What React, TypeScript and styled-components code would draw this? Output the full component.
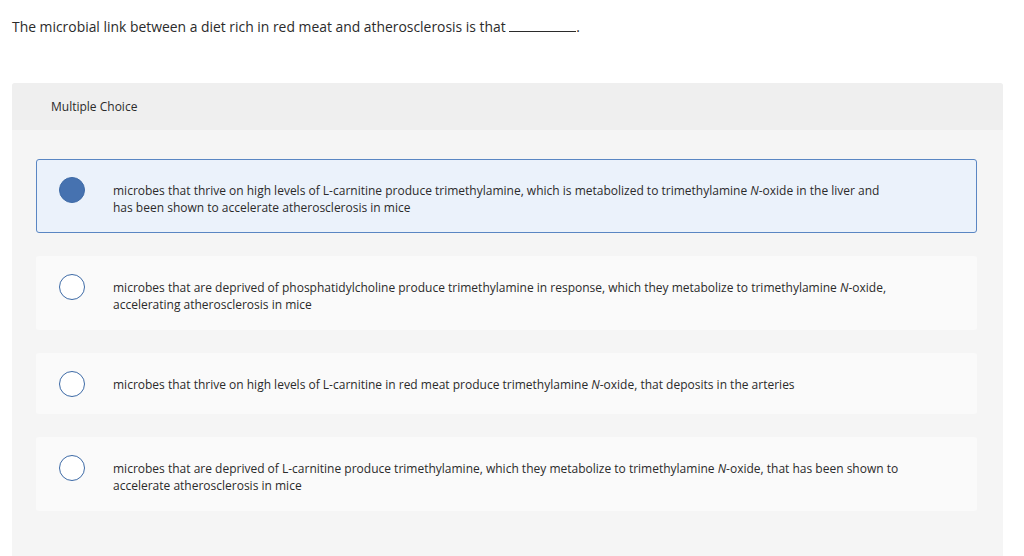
import React, { useState } from "react";
import styled, { createGlobalStyle } from "styled-components";

const GlobalStyle = createGlobalStyle`
  body {
    margin: 0;
    background: #ffffff;
    font-family: "Open Sans", "Liberation Sans", Arial, sans-serif;
    color: #333333;
  }
`;

const Page = styled.div`
  padding: 17px 21px 0 12px;
`;

const Question = styled.p`
  margin: 0 0 47px;
  font-size: 13.9px;
  line-height: 19px;
  color: #2b2b2b;
`;

const Blank = styled.span`
  display: inline-block;
  width: 67px;
  border-bottom: 1px solid #2b2b2b;
  vertical-align: baseline;
`;

const Panel = styled.section`
  background: #f5f5f5;
  border-radius: 3px 3px 0 0;
  min-height: 473px;
`;

const PanelHeader = styled.div`
  height: 47px;
  display: flex;
  align-items: center;
  padding-left: 39px;
  background: #efefef;
  border-radius: 3px 3px 0 0;
  font-size: 12px;
  color: #2b2b2b;
`;

const Choices = styled.ul`
  list-style: none;
  margin: 0;
  padding: 29px 26px 0 24px;
  display: flex;
  flex-direction: column;
  gap: 23px;
`;

const Choice = styled.li<{ $selected: boolean }>`
  display: flex;
  align-items: flex-start;
  gap: 28px;
  padding: 17px 24px 16px 22px;
  border: 1px solid ${(p) => (p.$selected ? "#5a86c3" : "transparent")};
  border-radius: 3px;
  background: ${(p) => (p.$selected ? "#ebf2fb" : "#fafafa")};
  cursor: pointer;
`;

const Radio = styled.span<{ $selected: boolean }>`
  flex: 0 0 auto;
  width: 26px;
  height: 26px;
  box-sizing: border-box;
  border-radius: 50%;
  border: 1.5px solid #3d6aa6;
  background: ${(p) => (p.$selected ? "#4672b0" : "#ffffff")};
`;

const ChoiceText = styled.span`
  max-width: 787px;
  padding-top: 5px;
  font-size: 12px;
  line-height: 17px;
  color: #2b2b2b;
`;

const choices: React.ReactNode[] = [
  <>
    microbes that thrive on high levels of L-carnitine produce trimethylamine,
    which is metabolized to trimethylamine <i>N</i>-oxide in the liver and has
    been shown to accelerate atherosclerosis in mice
  </>,
  <>
    microbes that are deprived of phosphatidylcholine produce trimethylamine in
    response, which they metabolize to trimethylamine <i>N</i>-oxide,
    accelerating atherosclerosis in mice
  </>,
  <>
    microbes that thrive on high levels of L-carnitine in red meat produce
    trimethylamine <i>N</i>-oxide, that deposits in the arteries
  </>,
  <>
    microbes that are deprived of L-carnitine produce trimethylamine, which they
    metabolize to trimethylamine <i>N</i>-oxide, that has been shown to
    accelerate atherosclerosis in mice
  </>,
];

const App: React.FC = () => {
  const [selected, setSelected] = useState(0);
  return (
    <>
      <GlobalStyle />
      <Page>
        <Question>
          The microbial link between a diet rich in red meat and
          atherosclerosis is that <Blank />.
        </Question>
        <Panel>
          <PanelHeader>Multiple Choice</PanelHeader>
          <Choices>
            {choices.map((c, i) => (
              <Choice
                key={i}
                $selected={selected === i}
                onClick={() => setSelected(i)}
              >
                <Radio $selected={selected === i} />
                <ChoiceText>{c}</ChoiceText>
              </Choice>
            ))}
          </Choices>
        </Panel>
      </Page>
    </>
  );
};

export default App;
